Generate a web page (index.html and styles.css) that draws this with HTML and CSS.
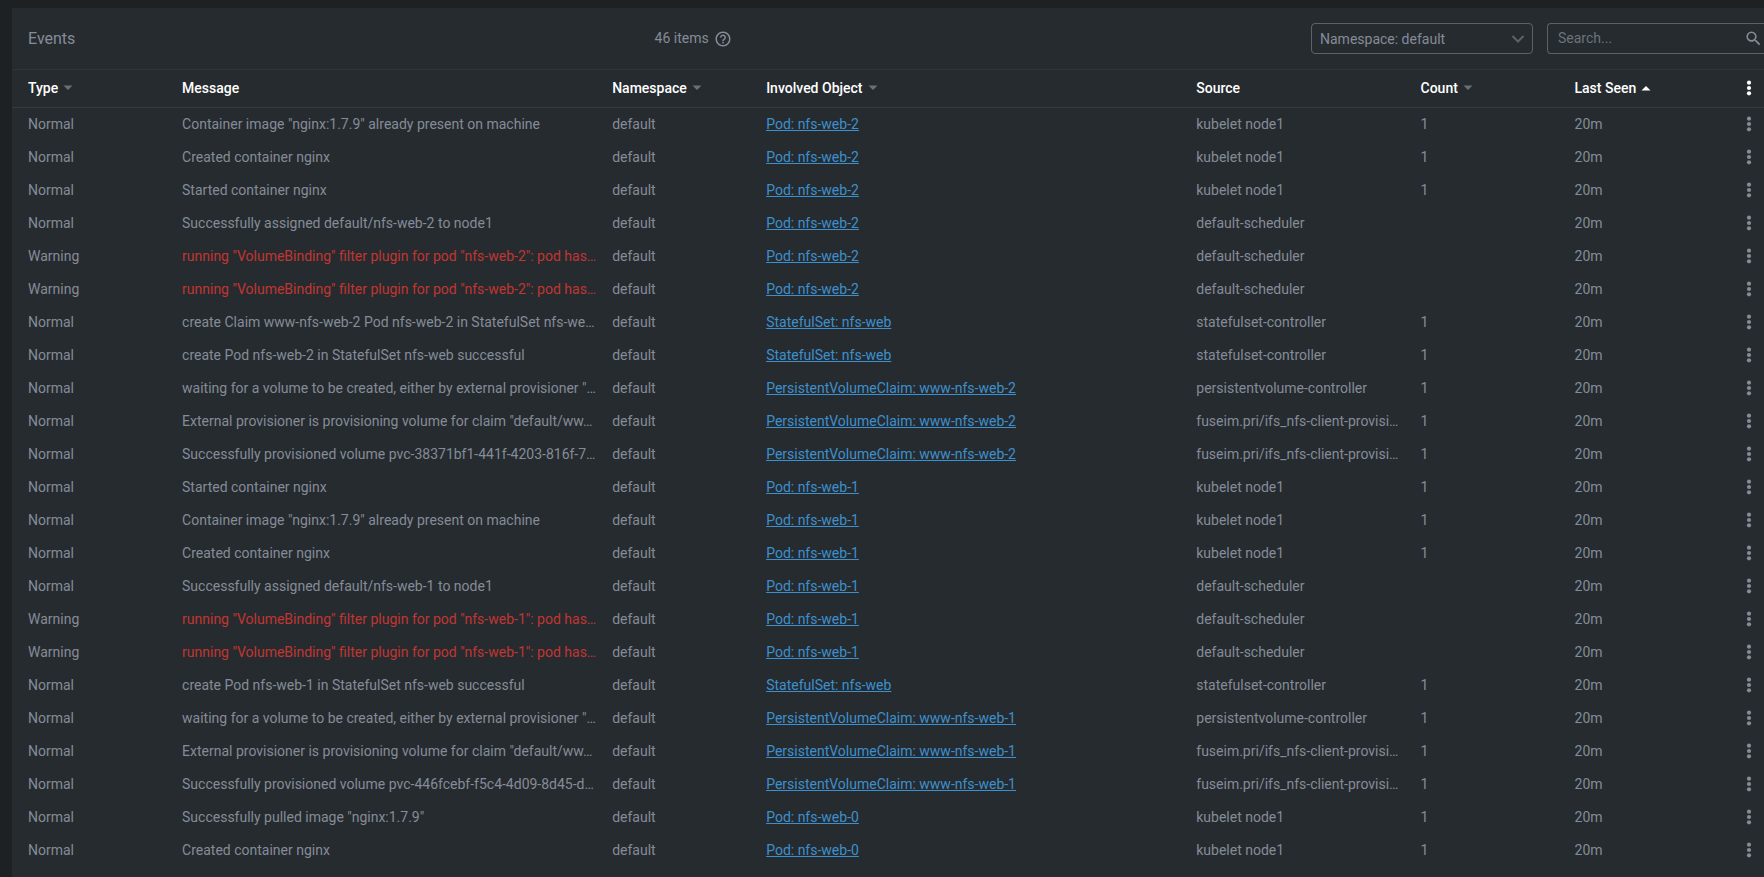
FILE: index.html
```html
<!DOCTYPE html>
<html lang="en">
<head>
    <meta charset="UTF-8">
    <meta name="viewport" content="width=device-width, initial-scale=1.0">
    <title>Events</title>
    <link rel="stylesheet" href="styles.css">
</head>
<body>
    <svg class="sprite" aria-hidden="true">
        <symbol id="dots" viewBox="0 0 20 20">
            <circle cx="10" cy="4.7" r="2.1"/>
            <circle cx="10" cy="10" r="2.1"/>
            <circle cx="10" cy="15.3" r="2.1"/>
        </symbol>
        <symbol id="arrow-down" viewBox="0 0 10 6"><path d="M0.5 0.5h9L5 5z"/></symbol>
        <symbol id="arrow-up" viewBox="0 0 10 6"><path d="M0.5 5.5h9L5 1z"/></symbol>
    </svg>

    <main class="panel">
        <header class="header">
            <h1 class="title">Events</h1>
            <div class="info">
                <span class="items">46 items</span>
                <svg class="help" viewBox="0 0 24 24"><path d="M11 18h2v-2h-2v2zm1-16C6.48 2 2 6.48 2 12s4.480 10 10 10 10-4.480 10-10S17.520 2 12 2zm0 18c-4.410 0-8-3.590-8-8s3.590-8 8-8 8 3.590 8 8-3.590 8-8 8zm0-14c-2.210 0-4 1.790-4 4h2c0-1.100.9-2 2-2s2 .9 2 2c0 2-3 1.750-3 5h2c0-2.250 3-2.500 3-5 0-2.210-1.790-4-4-4z"/></svg>
            </div>
            <div class="namespace">
                <select aria-label="Namespace">
                    <option>Namespace: default</option>
                </select>
                <svg class="chevron" viewBox="0 0 14 8"><path d="M1.500 1L7 6.500 12.500 1"/></svg>
            </div>
            <div class="search">
                <input type="text" placeholder="Search..." aria-label="Search">
                <svg class="magnifier" viewBox="0 0 24 24"><path d="M15.500 14h-.79l-.28-.27A6.471 6.471 0 0 0 16 9.500 6.500 6.500 0 1 0 9.500 16c1.610 0 3.090-.59 4.230-1.570l.27.28v.79l5 4.990L20.490 19l-4.990-5zm-6 0C7.010 14 5 11.990 5 9.500S7.010 5 9.500 5 14 7.010 14 9.500 11.990 14 9.500 14z"/></svg>
            </div>
        </header>

        <table class="events">
            <colgroup>
                <col class="col-type">
                <col class="col-wide">
                <col class="col-small">
                <col class="col-wide">
                <col class="col-source">
                <col class="col-small">
                <col class="col-small">
                <col class="col-menu">
            </colgroup>
            <thead>
                <tr>
                    <th><button class="sort">Type <svg><use href="#arrow-down"/></svg></button></th>
                    <th>Message</th>
                    <th><button class="sort">Namespace <svg><use href="#arrow-down"/></svg></button></th>
                    <th><button class="sort">Involved Object <svg><use href="#arrow-down"/></svg></button></th>
                    <th>Source</th>
                    <th><button class="sort">Count <svg><use href="#arrow-down"/></svg></button></th>
                    <th><button class="sort active">Last Seen <svg><use href="#arrow-up"/></svg></button></th>
                    <th><button class="menu" aria-label="Columns"><svg><use href="#dots"/></svg></button></th>
                </tr>
            </thead>
            <tbody id="eventRows"></tbody>
        </table>
    </main>

    <script>
        const volumeWait = 'waiting for a volume to be created, either by external provisioner "…';
        const volumeClaim = 'External provisioner is provisioning volume for claim "default/ww…';
        const binding2 = 'running "VolumeBinding" filter plugin for pod "nfs-web-2": pod has…';
        const binding1 = 'running "VolumeBinding" filter plugin for pod "nfs-web-1": pod has…';
        const provisioner = 'fuseim.pri/ifs_nfs-client-provisi…';

        // type, message, involved object, source, count
        const events = [
            ['Normal', 'Container image "nginx:1.7.9" already present on machine', 'Pod: nfs-web-2', 'kubelet node1', 1],
            ['Normal', 'Created container nginx', 'Pod: nfs-web-2', 'kubelet node1', 1],
            ['Normal', 'Started container nginx', 'Pod: nfs-web-2', 'kubelet node1', 1],
            ['Normal', 'Successfully assigned default/nfs-web-2 to node1', 'Pod: nfs-web-2', 'default-scheduler', ''],
            ['Warning', binding2, 'Pod: nfs-web-2', 'default-scheduler', ''],
            ['Warning', binding2, 'Pod: nfs-web-2', 'default-scheduler', ''],
            ['Normal', 'create Claim www-nfs-web-2 Pod nfs-web-2 in StatefulSet nfs-we…', 'StatefulSet: nfs-web', 'statefulset-controller', 1],
            ['Normal', 'create Pod nfs-web-2 in StatefulSet nfs-web successful', 'StatefulSet: nfs-web', 'statefulset-controller', 1],
            ['Normal', volumeWait, 'PersistentVolumeClaim: www-nfs-web-2', 'persistentvolume-controller', 1],
            ['Normal', volumeClaim, 'PersistentVolumeClaim: www-nfs-web-2', provisioner, 1],
            ['Normal', 'Successfully provisioned volume pvc-38371bf1-441f-4203-816f-7…', 'PersistentVolumeClaim: www-nfs-web-2', provisioner, 1],
            ['Normal', 'Started container nginx', 'Pod: nfs-web-1', 'kubelet node1', 1],
            ['Normal', 'Container image "nginx:1.7.9" already present on machine', 'Pod: nfs-web-1', 'kubelet node1', 1],
            ['Normal', 'Created container nginx', 'Pod: nfs-web-1', 'kubelet node1', 1],
            ['Normal', 'Successfully assigned default/nfs-web-1 to node1', 'Pod: nfs-web-1', 'default-scheduler', ''],
            ['Warning', binding1, 'Pod: nfs-web-1', 'default-scheduler', ''],
            ['Warning', binding1, 'Pod: nfs-web-1', 'default-scheduler', ''],
            ['Normal', 'create Pod nfs-web-1 in StatefulSet nfs-web successful', 'StatefulSet: nfs-web', 'statefulset-controller', 1],
            ['Normal', volumeWait, 'PersistentVolumeClaim: www-nfs-web-1', 'persistentvolume-controller', 1],
            ['Normal', volumeClaim, 'PersistentVolumeClaim: www-nfs-web-1', provisioner, 1],
            ['Normal', 'Successfully provisioned volume pvc-446fcebf-f5c4-4d09-8d45-d…', 'PersistentVolumeClaim: www-nfs-web-1', provisioner, 1],
            ['Normal', 'Successfully pulled image "nginx:1.7.9"', 'Pod: nfs-web-0', 'kubelet node1', 1],
            ['Normal', 'Created container nginx', 'Pod: nfs-web-0', 'kubelet node1', 1]
        ];

        document.getElementById('eventRows').innerHTML = events.map(([type, message, object, source, count]) => `
            <tr>
                <td>${type}</td>
                <td class="${type === 'Warning' ? 'warning' : ''}">${message}</td>
                <td>default</td>
                <td><a href="#">${object}</a></td>
                <td>${source}</td>
                <td>${count}</td>
                <td>20m</td>
                <td><button class="menu" aria-label="Actions"><svg><use href="#dots"/></svg></button></td>
            </tr>`).join('');
    </script>
</body>
</html>
```
FILE: styles.css
```css
* {
    box-sizing: border-box;
}

body {
    margin: 0;
    padding: 8px 0 0 12px;
    min-height: 100vh;
    display: flex;
    flex-direction: column;
    background-color: #1e2124;
    color: #858b98;
    font-family: Roboto, sans-serif;
    font-size: 14px;
    line-height: 20px;
}

button,
select,
input {
    font: inherit;
    color: inherit;
    background: none;
    border: none;
    outline: none;
}

svg {
    fill: currentColor;
}

.sprite {
    display: none;
}

.panel {
    flex: 1;
    background-color: #262b2f;
}

.header {
    display: flex;
    align-items: center;
    height: 62px;
    padding-left: 16px;
    border-bottom: 1px solid #2f3439;
}

.title {
    margin: 0;
    font-size: 16px;
    font-weight: 400;
}

.info {
    flex: 1;
    display: flex;
    justify-content: center;
    align-items: center;
    gap: 5px;
}

.items {
    padding-bottom: 2px;
}

.help {
    width: 18px;
    height: 18px;
}

.namespace {
    position: relative;
    width: 222px;
    margin-right: 14px;
}

.namespace select {
    width: 100%;
    height: 31px;
    padding: 0 8px;
    appearance: none;
    border: 1px solid #5c6269;
    border-radius: 4px;
}

.chevron {
    position: absolute;
    top: 12px;
    right: 8px;
    width: 14px;
    height: 8px;
    fill: none;
    stroke: #5c6269;
    stroke-width: 2;
    pointer-events: none;
}

.search {
    display: flex;
    align-items: center;
    width: 217px;
    height: 31px;
    padding: 0 1px 0 10px;
    border: 1px solid #5c6269;
    border-right: none;
    border-radius: 4px 0 0 4px;
}

.search input {
    flex: 1;
    min-width: 0;
    padding: 0 0 2px;
}

.search input::placeholder {
    color: #6c737c;
}

.magnifier {
    width: 19px;
    height: 19px;
}

.events {
    width: 100%;
    table-layout: fixed;
    border-collapse: separate;
    border-spacing: 0;
}

.col-type {
    width: 9.25%;
}

.col-wide {
    width: 24.55%;
}

.col-small {
    width: 8.79%;
}

.col-source {
    width: 12.8%;
}

th,
td {
    height: 33px;
    padding: 0 4px 2px 8px;
    text-align: left;
    white-space: nowrap;
    overflow: hidden;
    text-overflow: ellipsis;
}

th {
    height: 38px;
    color: #fff;
    font-weight: 500;
    border-bottom: 1px solid #363b40;
}

th:first-child,
td:first-child {
    padding-left: 16px;
}

th:last-child,
td:last-child {
    padding: 0 5px 1px 0;
}

td a {
    color: #3d90ce;
}

.warning {
    color: #c13632;
}

.sort {
    display: flex;
    align-items: center;
    gap: 5px;
    padding: 0;
    cursor: pointer;
}

.sort svg {
    width: 10px;
    height: 6px;
    color: #6b7075;
}

.sort.active svg {
    color: #fff;
}

.menu {
    display: block;
    margin-left: auto;
    padding: 0;
    cursor: pointer;
}

.menu svg {
    display: block;
    width: 20px;
    height: 20px;
}
```
